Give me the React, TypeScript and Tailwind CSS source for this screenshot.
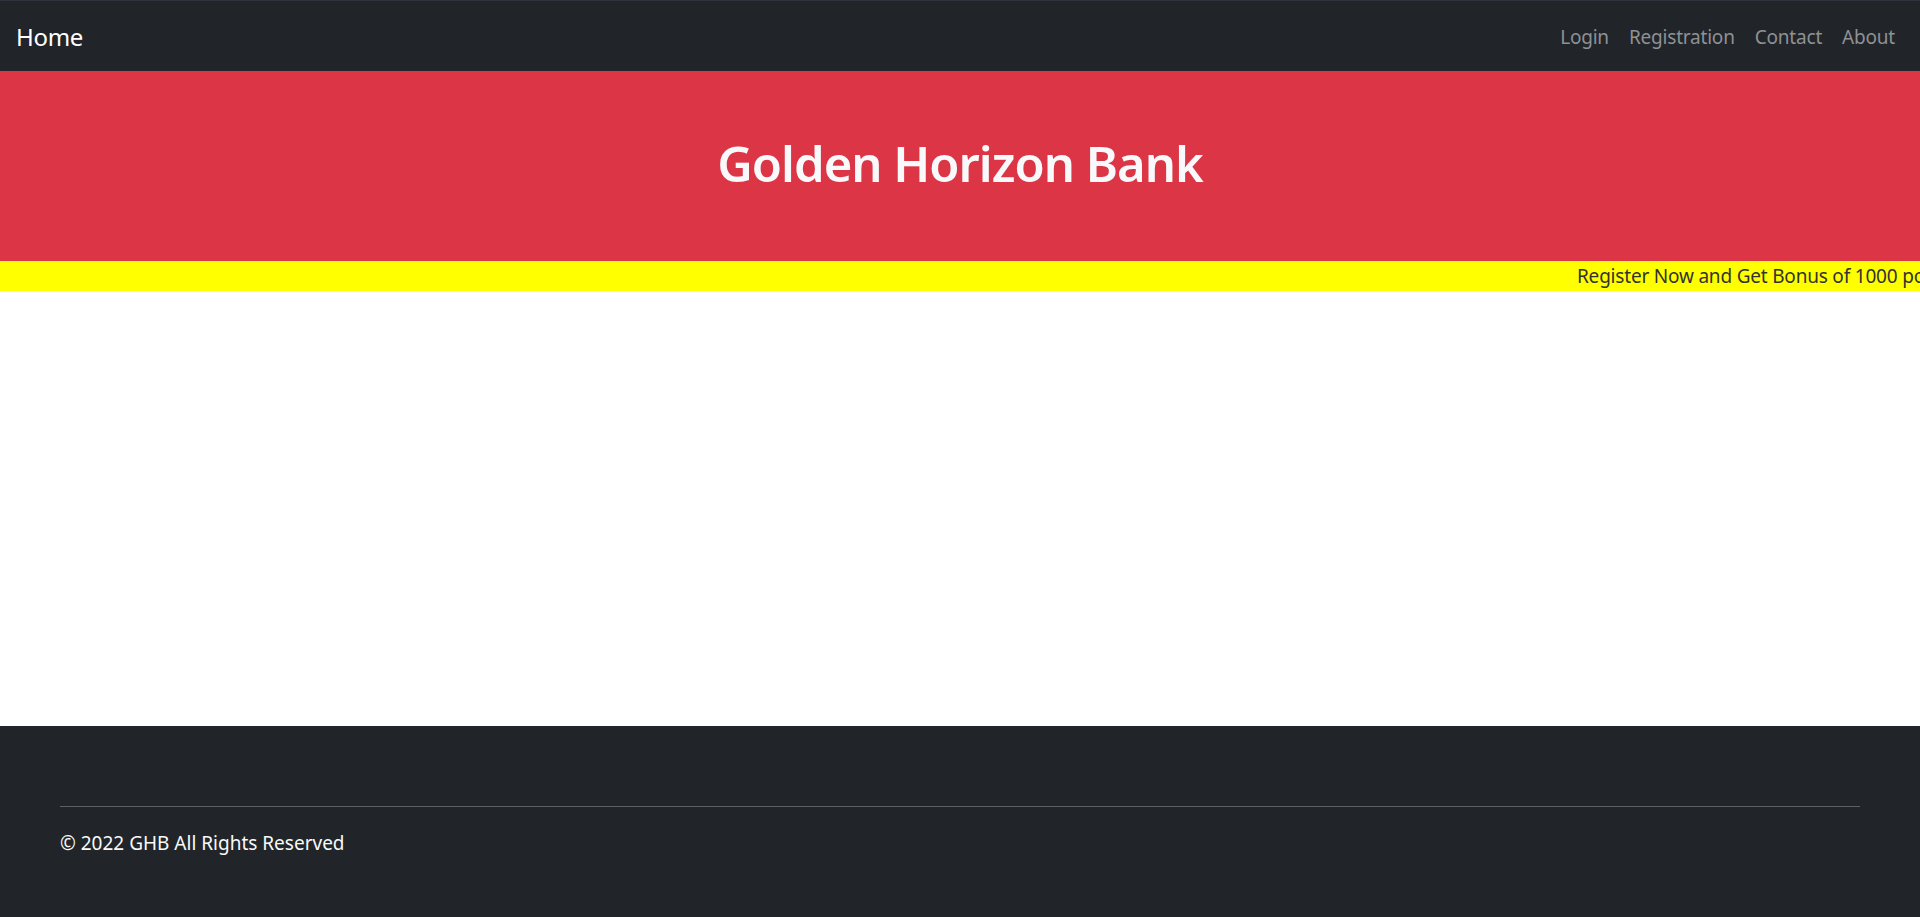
export default function App() {
  const font = { fontFamily: '"Noto Sans", "Open Sans", sans-serif' };
  return (
    <div className="flex min-h-[917px] flex-col bg-white" style={font}>
      <nav className="flex h-[71px] items-center justify-between border-t border-[#2e323c] bg-[#212529] pl-4 pr-[15px]">
        <a className="pt-px text-[24px] tracking-[-0.3px] text-white">Home</a>
        <ul className="flex items-center pt-[2px] text-[19px] tracking-[-0.2px] text-[#8f9194]">
          <li className="px-[10px]">Login</li>
          <li className="px-[10px]">Registration</li>
          <li className="px-[10px]">Contact</li>
          <li className="px-[10px]">About</li>
        </ul>
      </nav>

      <header className="flex h-[190px] justify-center bg-[#dc3545] pt-[63px]">
        <h1 className="text-[49px] font-semibold leading-[1.2] tracking-[-1px] text-[#f8f9fa]">Golden Horizon Bank</h1>
      </header>

      <div className="flex h-[30px] items-center overflow-hidden whitespace-nowrap bg-[#ffff00] pl-[1577px] text-[19px] tracking-[-0.2px] text-[#333333]">
        Register Now and Get Bonus of 1000 points
      </div>

      <main className="h-[435px]" />

      <footer className="flex-1 bg-[#212529] px-[60px] pt-20 text-[19px] text-[#f8f9fa]">
        <hr className="border-t border-[#5c5f63]" />
        <p className="pt-[22px]">© 2022 GHB All Rights Reserved</p>
      </footer>
    </div>
  );
}
